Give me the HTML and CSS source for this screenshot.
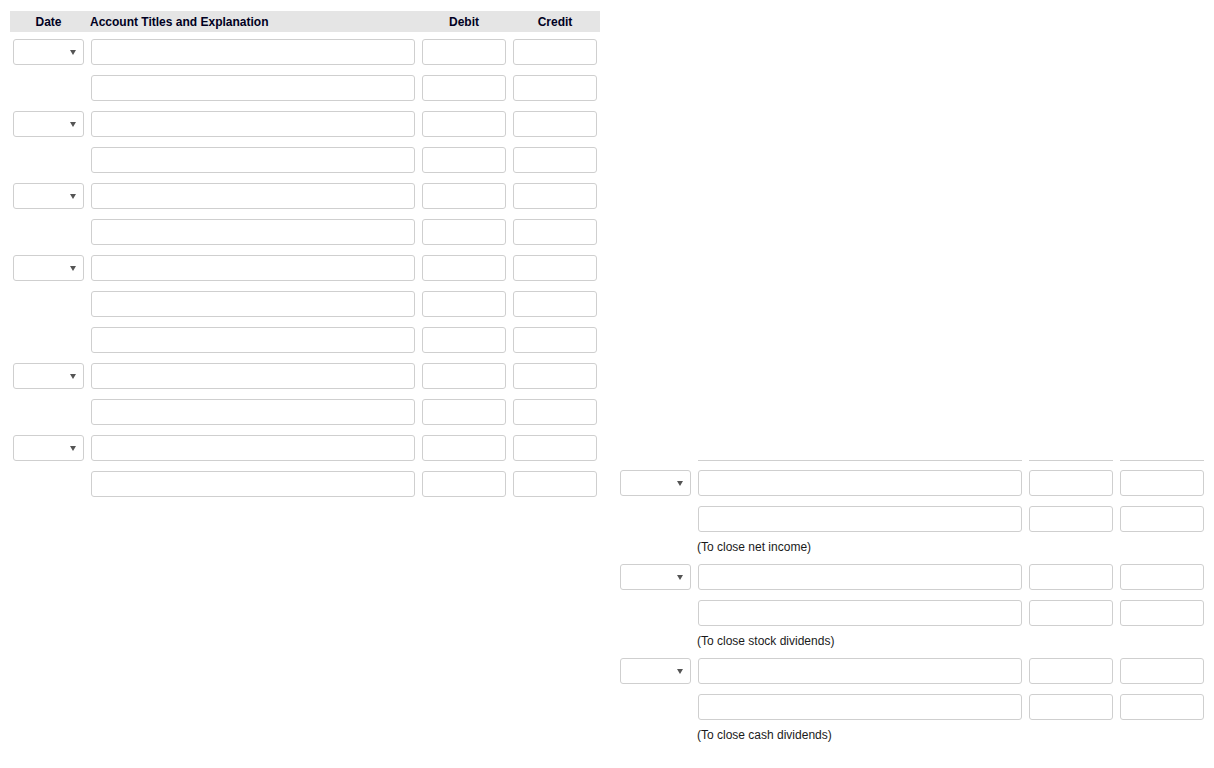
FILE: index.html
```html
<!DOCTYPE html>
<html lang="en">
<head>
  <meta charset="UTF-8" />
  <title>Journal Entries</title>
  <link rel="stylesheet" href="styles.css">
</head>
<body>
  <div class="page">
    <!-- left journal -->
    <div class="journal">
      <div class="head">
        <div class="h-date">Date</div>
        <div class="h-title">Account Titles and Explanation</div>
        <div class="h-num">Debit</div>
        <div class="h-num">Credit</div>
      </div>

      <div class="row"><div class="date-select"></div><input type="text" class="acct"><input type="text" class="amt"><input type="text" class="amt"></div>
      <div class="row"><div></div><input type="text" class="acct"><input type="text" class="amt"><input type="text" class="amt"></div>

      <div class="row"><div class="date-select"></div><input type="text" class="acct"><input type="text" class="amt"><input type="text" class="amt"></div>
      <div class="row"><div></div><input type="text" class="acct"><input type="text" class="amt"><input type="text" class="amt"></div>

      <div class="row"><div class="date-select"></div><input type="text" class="acct"><input type="text" class="amt"><input type="text" class="amt"></div>
      <div class="row"><div></div><input type="text" class="acct"><input type="text" class="amt"><input type="text" class="amt"></div>

      <div class="row"><div class="date-select"></div><input type="text" class="acct"><input type="text" class="amt"><input type="text" class="amt"></div>
      <div class="row"><div></div><input type="text" class="acct"><input type="text" class="amt"><input type="text" class="amt"></div>
      <div class="row"><div></div><input type="text" class="acct"><input type="text" class="amt"><input type="text" class="amt"></div>

      <div class="row"><div class="date-select"></div><input type="text" class="acct"><input type="text" class="amt"><input type="text" class="amt"></div>
      <div class="row"><div></div><input type="text" class="acct"><input type="text" class="amt"><input type="text" class="amt"></div>

      <div class="row"><div class="date-select"></div><input type="text" class="acct"><input type="text" class="amt"><input type="text" class="amt"></div>
      <div class="row"><div></div><input type="text" class="acct"><input type="text" class="amt"><input type="text" class="amt"></div>
    </div>

    <!-- right journal (closing entries, scrolled) -->
    <div class="journal closing">
      <div class="row stub"><div></div><div class="cut"></div><div class="cut"></div><div class="cut"></div></div>

      <div class="row"><div class="date-select"></div><input type="text" class="acct"><input type="text" class="amt"><input type="text" class="amt"></div>
      <div class="row last"><div></div><input type="text" class="acct"><input type="text" class="amt"><input type="text" class="amt"></div>
      <div class="note">(To close net income)</div>

      <div class="row"><div class="date-select"></div><input type="text" class="acct"><input type="text" class="amt"><input type="text" class="amt"></div>
      <div class="row last"><div></div><input type="text" class="acct"><input type="text" class="amt"><input type="text" class="amt"></div>
      <div class="note">(To close stock dividends)</div>

      <div class="row"><div class="date-select"></div><input type="text" class="acct"><input type="text" class="amt"><input type="text" class="amt"></div>
      <div class="row last"><div></div><input type="text" class="acct"><input type="text" class="amt"><input type="text" class="amt"></div>
      <div class="note">(To close cash dividends)</div>
    </div>
  </div>
</body>
</html>
```

FILE: styles.css
```css
* { box-sizing: border-box; }
html, body {
  margin: 0;
  padding: 0;
  background-color: #fff;
  font-family: "Liberation Sans", Arial, sans-serif;
  font-size: 12px;
  color: #111;
}

.page {
  display: flex;
  align-items: flex-start;
  gap: 17px;
  padding: 11px 0 0 10px;
}

.journal {
  width: 590px;
  display: flex;
  flex-direction: column;
}

.head,
.row {
  display: grid;
  grid-template-columns: 71px 324px 84px 84px;
  column-gap: 7px;
  padding: 0 3px;
}

.head {
  height: 21px;
  align-items: center;
  background-color: #e5e5e5;
  font-weight: bold;
  color: #000022;
  margin-bottom: 7px;
}
.h-date, .h-num { text-align: center; }
.h-title { margin-left: -1px; }

.row {
  height: 26px;
  margin-bottom: 10px;
}
.row.last { margin-bottom: 0; }

.row input {
  width: 100%;
  height: 26px;
  margin: 0;
  padding: 0 5px;
  border: 1px solid #cfcfcf;
  border-radius: 3px;
  background-color: #fff;
  font: inherit;
}

/* fake dropdown */
.date-select {
  position: relative;
  height: 26px;
  border: 1px solid #cfcfcf;
  border-radius: 3px;
  background-color: #fff;
}
.date-select::after {
  content: "";
  position: absolute;
  right: 7px;
  top: 10px;
  border-left: 3px solid transparent;
  border-right: 3px solid transparent;
  border-top: 5px solid #555;
}

/* closing entries */
.closing { margin-top: 449px; }
.row.stub {
  height: 1px;
  margin-bottom: 9px;
}
.cut { border-bottom: 1px solid #cfcfcf; }

.note {
  height: 18px;
  line-height: 18px;
  margin: 6px 0 8px 80px;
  color: #1a1a1a;
}
```
